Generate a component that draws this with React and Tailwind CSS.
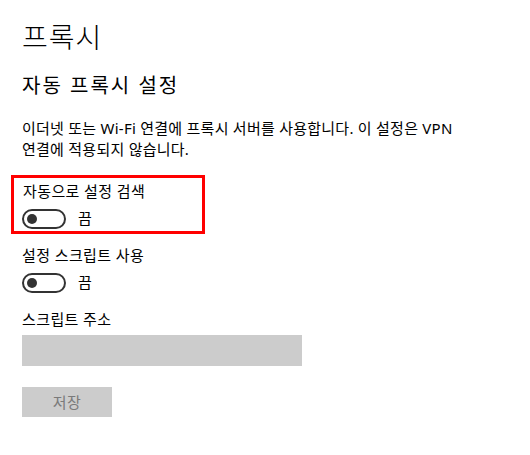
import React from 'react'

function Toggle() {
  return (
    <div className="flex items-center">
      <div className="w-[44px] h-[20px] rounded-full border-2 border-[#333333] flex items-center pl-[3px]">
        <div className="w-[10px] h-[10px] rounded-full bg-[#333333]" />
      </div>
      <span className="ml-[12px] text-[15px] leading-[21px] text-black">끔</span>
    </div>
  )
}

export default function App() {
  return (
    <main
      className="w-[530px] h-[455px] bg-white pl-[22px] pt-[19px] text-black"
      style={{ fontFamily: '"Noto Sans", "Noto Sans CJK KR", sans-serif' }}
    >
      <h1 className="text-[28px] leading-[36px] font-light tracking-[1px]">프록시</h1>
      <h2 className="mt-[17px] text-[20px] leading-[28px] font-normal tracking-[2px]">자동 프록시 설정</h2>
      <p className="mt-[18px] text-[15px] leading-[21px] tracking-[0.25px]">
        이더넷 또는 Wi-Fi 연결에 프록시 서버를 사용합니다. 이 설정은 VPN
        <br />
        연결에 적용되지 않습니다.
      </p>

      <div className="mt-[15px] ml-[-11px] w-[194px] border-[3px] border-[#ff0000] pl-[9px] pt-[3px] pb-[2px]">
        <div className="text-[15px] leading-[21px] tracking-[0.4px]">자동으로 설정 검색</div>
        <div className="mt-[6px] -ml-px">
          <Toggle />
        </div>
      </div>

      <div className="mt-[11px] text-[15px] leading-[21px] tracking-[0.4px]">설정 스크립트 사용</div>
      <div className="mt-[6px]">
        <Toggle />
      </div>

      <div className="mt-[16px] text-[15px] leading-[21px] tracking-[0.4px]">스크립트 주소</div>
      <div className="mt-[5px] w-[280px] h-[31px] bg-[#cccccc]" />

      <button className="mt-[21px] w-[90px] h-[30px] bg-[#cccccc] text-[15px] text-[#7a7a7a] tracking-[0.4px] flex items-center justify-center">
        저장
      </button>
    </main>
  )
}
